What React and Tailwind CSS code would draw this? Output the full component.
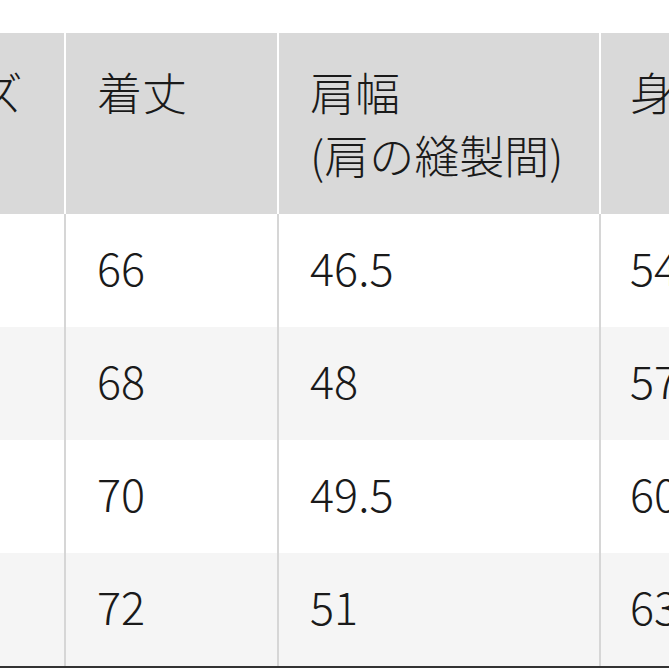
export default function App() {
  const font = { fontFamily: '"Noto Sans CJK JP", "Noto Sans", sans-serif' };
  const rows = [
    ["M", "66", "46.5", "54"],
    ["L", "68", "48", "57"],
    ["XL", "70", "49.5", "60"],
    ["XXL", "72", "51", "63"],
  ];
  const widths = ["w-[208px]", "w-[213px]", "w-[322px]", "w-[300px]"];
  return (
    <div className="w-[669px] h-[669px] overflow-hidden bg-white pt-[33px] text-[#1a1a1a] font-light" style={font}>
      <div className="ml-[-142px] flex flex-col">
        <div className="flex h-[181px] bg-[#d9d9d9]">
          <div className={`${widths[0]} shrink-0 border-r-2 border-white pl-[31px] pt-[27px] text-[45px] leading-[63px]`}>サイズ</div>
          <div className={`${widths[1]} shrink-0 border-r-2 border-white pl-[31px] pt-[27px] text-[45px] leading-[63px]`}>着丈</div>
          <div className={`${widths[2]} shrink-0 border-r-2 border-white pl-[31px] pt-[27px] text-[45px] leading-[63px]`}>
            <div>肩幅</div>
            <div>(肩の縫製間)</div>
          </div>
          <div className={`${widths[3]} shrink-0 pl-[29px] pt-[27px] text-[45px] leading-[63px]`}>身幅</div>
        </div>
        {rows.map((r, i) => (
          <div key={i} className={`flex h-[113px] ${i % 2 === 1 ? "bg-[#f5f5f5]" : "bg-white"}`}>
            {r.map((c, j) => (
              <div
                key={j}
                className={`${widths[j]} shrink-0 flex items-center pb-[9px] ${j < 3 ? "border-r-2 border-[#d6d6d6]" : ""} ${j === 3 ? "pl-[29px]" : "pl-[31px]"} text-[45px] leading-none`}
              >
                {c}
              </div>
            ))}
          </div>
        ))}
        <div className="h-[2px] bg-[#333333]"></div>
      </div>
    </div>
  );
}
